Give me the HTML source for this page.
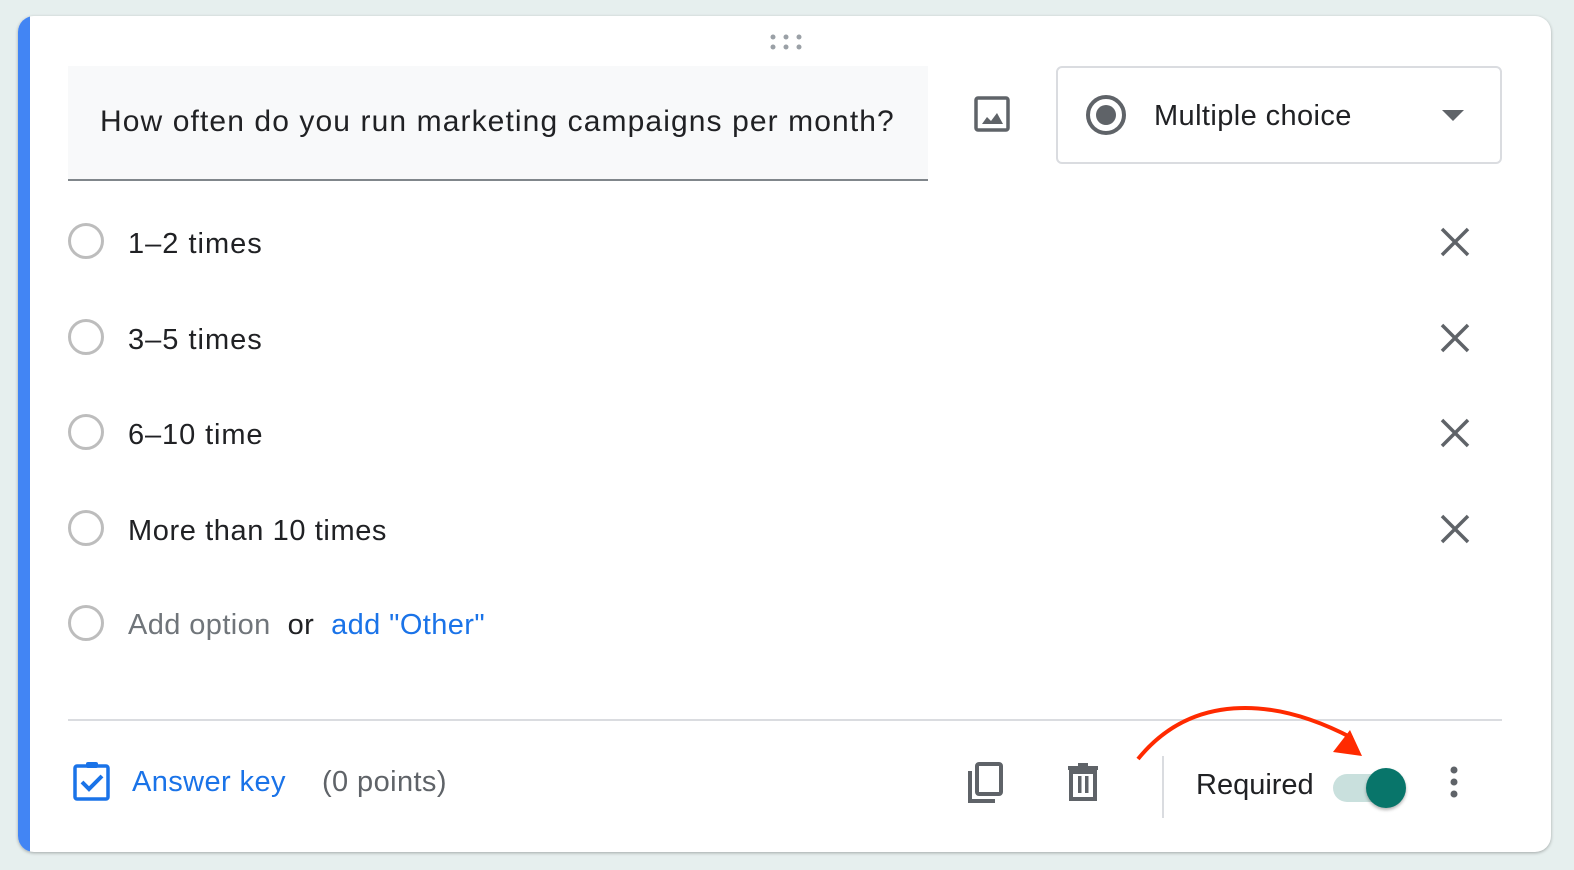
<!DOCTYPE html>
<html><head><meta charset="utf-8"><style>
body{margin:0;width:1574px;height:870px;background:#e6efee;font-family:"Liberation Sans",sans-serif;overflow:hidden;position:relative}
.card{position:absolute;left:18px;top:16px;width:1533px;height:836px;background:#fff;border-radius:16px;box-shadow:0 1px 3px rgba(0,0,0,.3);overflow:hidden}
.bar{position:absolute;left:0;top:0;width:12px;height:100%;background:#4285f4}
.a{position:absolute}
.t{font-size:29px;color:#202124;white-space:nowrap;letter-spacing:0.4px}
.rad{width:36px;height:36px;border:3px solid #bdbdbd;border-radius:50%;box-sizing:border-box}
</style></head><body>
<div class="card"><div class="bar"></div></div>
<svg class="a" style="left:770px;top:34px" width="32" height="16"><g fill="#9aa0a6"><circle cx="3" cy="3" r="2.5"/><circle cx="16" cy="3" r="2.5"/><circle cx="29" cy="3" r="2.5"/><circle cx="3" cy="13" r="2.5"/><circle cx="16" cy="13" r="2.5"/><circle cx="29" cy="13" r="2.5"/></g></svg>
<div class="a" style="left:68px;top:66px;width:860px;height:113px;background:#f8f9fa;border-bottom:2px solid #80868b"></div>
<div class="a t" style="left:100px;top:105px;font-size:30px;letter-spacing:1.1px">How often do you run marketing campaigns per month?</div>
<svg class="a" style="left:974px;top:96px" width="36" height="36" viewBox="0 0 36 36"><rect x="2" y="2" width="32" height="32" rx="2" fill="none" stroke="#5f6368" stroke-width="3.5"/><path d="M8 28 L13 21 L17 25 L23 17 L29 28Z" fill="#5f6368"/></svg>
<div class="a" style="left:1056px;top:66px;width:446px;height:98px;border:2px solid #dadce0;border-radius:6px;box-sizing:border-box"></div>
<div class="a" style="left:1086px;top:95px;width:40px;height:40px;border:4px solid #5f6368;border-radius:50%;box-sizing:border-box"><div style="position:absolute;left:6px;top:6px;width:20px;height:20px;border-radius:50%;background:#5f6368"></div></div>
<div class="a t" style="left:1154px;top:100px">Multiple choice</div>
<svg class="a" style="left:1442px;top:110px" width="22" height="12"><path d="M0 0H22L11 11Z" fill="#5f6368"/></svg>

<div class="a rad" style="left:68px;top:223px"></div><div class="a t" style="left:128px;top:228px;letter-spacing:1px">1–2 times</div>
<div class="a rad" style="left:68px;top:319px"></div><div class="a t" style="left:128px;top:324px;letter-spacing:1px">3–5 times</div>
<div class="a rad" style="left:68px;top:414px"></div><div class="a t" style="left:128px;top:419px;letter-spacing:0.9px">6–10 time</div>
<div class="a rad" style="left:68px;top:510px"></div><div class="a t" style="left:128px;top:515px;letter-spacing:0.6px">More than 10 times</div>
<div class="a rad" style="left:68px;top:605px"></div>
<div class="a t" style="left:128px;top:609px;letter-spacing:0.4px"><span style="color:#70757a">Add option</span>&nbsp; or &nbsp;<span style="color:#1a73e8">add "Other"</span></div>
<svg class="a" style="left:1440px;top:227px" width="30" height="30"><path d="M2 2L28 28M28 2L2 28" stroke="#5f6368" stroke-width="3.5"/></svg>
<svg class="a" style="left:1440px;top:323px" width="30" height="30"><path d="M2 2L28 28M28 2L2 28" stroke="#5f6368" stroke-width="3.5"/></svg>
<svg class="a" style="left:1440px;top:418px" width="30" height="30"><path d="M2 2L28 28M28 2L2 28" stroke="#5f6368" stroke-width="3.5"/></svg>
<svg class="a" style="left:1440px;top:514px" width="30" height="30"><path d="M2 2L28 28M28 2L2 28" stroke="#5f6368" stroke-width="3.5"/></svg>

<div class="a" style="left:68px;top:719px;width:1434px;height:2px;background:#dadce0"></div>
<svg class="a" style="left:73px;top:761px" width="38" height="40" viewBox="0 0 38 40"><rect x="2" y="5" width="33" height="33" rx="2" fill="none" stroke="#1a73e8" stroke-width="3.5"/><rect x="13" y="1" width="12" height="6" rx="2" fill="#1a73e8"/><path d="M9 21L16 28L29 15" fill="none" stroke="#1a73e8" stroke-width="4"/></svg>
<div class="a t" style="left:132px;top:766px;color:#1a73e8">Answer key</div>
<div class="a t" style="left:322px;top:766px;color:#5f6368">(0 points)</div>
<svg class="a" style="left:967px;top:762px" width="38" height="42" viewBox="0 0 38 42"><path d="M3 9V39H28" fill="none" stroke="#5f6368" stroke-width="4"/><rect x="10" y="2" width="24" height="30" rx="2" fill="none" stroke="#5f6368" stroke-width="4"/></svg>
<svg class="a" style="left:1066px;top:763px" width="34" height="38" viewBox="0 0 34 38"><rect x="2" y="3" width="30" height="4" fill="#5f6368"/><rect x="12" y="0" width="10" height="4" fill="#5f6368"/><rect x="5" y="9" width="24" height="27" fill="none" stroke="#5f6368" stroke-width="4"/><rect x="12" y="13" width="3.5" height="17" fill="#5f6368"/><rect x="19" y="13" width="3.5" height="17" fill="#5f6368"/></svg>
<div class="a" style="left:1162px;top:756px;width:2px;height:62px;background:#dadce0"></div>
<div class="a t" style="left:1196px;top:769px;letter-spacing:0">Required</div>
<div class="a" style="left:1333px;top:774px;width:66px;height:28px;border-radius:14px;background:#c9e0dd"></div>
<div class="a" style="left:1366px;top:768px;width:40px;height:40px;border-radius:50%;background:#08756a;box-shadow:0 2px 3px rgba(0,0,0,.3)"></div>
<svg class="a" style="left:1448px;top:766px" width="12" height="34"><g fill="#5f6368"><circle cx="6" cy="4" r="3.5"/><circle cx="6" cy="16" r="3.5"/><circle cx="6" cy="28" r="3.5"/></g></svg>
<svg class="a" style="left:1130px;top:700px" width="240" height="70"><path d="M8 59 C60 -5 140 -5 222 38" fill="none" stroke="#ff2a00" stroke-width="4"/><path d="M203 52 L232 56 L220 30Z" fill="#ff2a00"/></svg>
</body></html>
